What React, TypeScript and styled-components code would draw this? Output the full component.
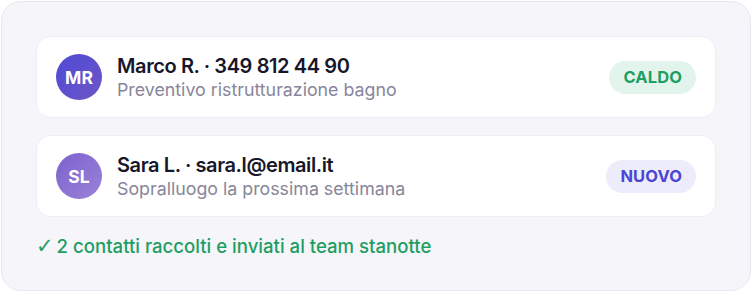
import React from "react";
import styled, { createGlobalStyle } from "styled-components";

const Global = createGlobalStyle`
  html, body { margin: 0; padding: 0; background: #ffffff; }
  body { font-family: Inter, "Noto Sans", sans-serif; -webkit-font-smoothing: antialiased; }
`;

const Panel = styled.div`
  box-sizing: border-box;
  margin: 1px;
  width: 750px;
  height: 290px;
  background: #f5f5fa;
  border: 1px solid #e7e7ef;
  border-radius: 20px;
  padding: 34px 34px 0 34px;
  display: flex;
  flex-direction: column;
  gap: 17px;
`;

const Card = styled.div`
  box-sizing: border-box;
  height: 82px;
  background: #ffffff;
  border: 1px solid #ededf3;
  border-radius: 14px;
  padding: 0 19px;
  display: flex;
  align-items: center;
  gap: 15px;
`;

const Avatar = styled.div<{ $from: string; $to: string }>`
  width: 46px;
  height: 46px;
  border-radius: 50%;
  flex: none;
  background: linear-gradient(135deg, ${(p) => p.$from}, ${(p) => p.$to});
  color: #ffffff;
  font-weight: 700;
  font-size: 17.5px;
  display: flex;
  align-items: center;
  justify-content: center;
`;

const Info = styled.div`
  flex: 1;
  display: flex;
  flex-direction: column;
  gap: 1px;
`;

const Name = styled.div`
  font-size: 20px;
  font-weight: 600;
  color: #17172b;
  line-height: 24px;
  letter-spacing: -0.4px;
`;

const Sub = styled.div`
  font-size: 17.8px;
  font-weight: 400;
  color: #86869a;
  line-height: 22px;
`;

const Badge = styled.div<{ $bg: string; $fg: string }>`
  height: 33px;
  padding: 0 14px;
  border-radius: 17px;
  background: ${(p) => p.$bg};
  color: ${(p) => p.$fg};
  font-size: 16.5px;
  font-weight: 700;
  letter-spacing: 0.1px;
  display: flex;
  align-items: center;
`;

const Footer = styled.div`
  margin-top: 1px;
  font-size: 18.6px;
  font-weight: 500;
  color: #1e9e62;
  line-height: 22px;
  display: flex;
  align-items: center;
  gap: 3px;
`;

const Check = styled.span`
  font-family: "DejaVu Sans", sans-serif;
  font-size: 21px;
  font-weight: 700;
`;

export default function App() {
  return (
    <>
      <Global />
      <Panel>
        <Card>
          <Avatar $from="#4f4ad6" $to="#6d56c6">MR</Avatar>
          <Info>
            <Name>Marco R. · 349 812 44 90</Name>
            <Sub>Preventivo ristrutturazione bagno</Sub>
          </Info>
          <Badge $bg="#e2f4eb" $fg="#1e9e62">CALDO</Badge>
        </Card>
        <Card>
          <Avatar $from="#7d62cc" $to="#9a82d9">SL</Avatar>
          <Info>
            <Name>Sara L. · sara.l@email.it</Name>
            <Sub>Sopralluogo la prossima settimana</Sub>
          </Info>
          <Badge $bg="#ececfb" $fg="#4b45d3">NUOVO</Badge>
        </Card>
        <Footer>
          <Check>✓</Check>
          <span>2 contatti raccolti e inviati al team stanotte</span>
        </Footer>
      </Panel>
    </>
  );
}
